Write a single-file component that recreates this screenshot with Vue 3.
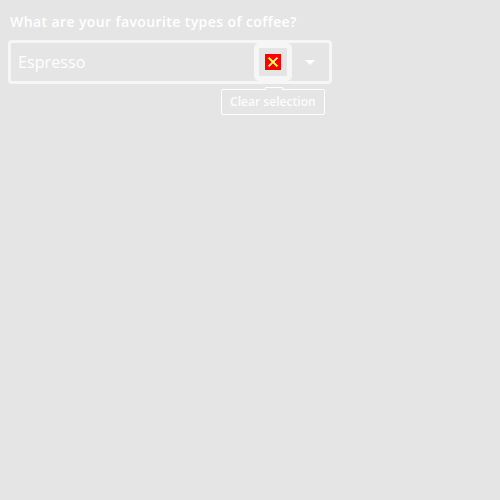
<script setup>
import { ref } from 'vue'

const label = 'What are your favourite types of coffee?'
const selected = ref('Espresso')
</script>

<template>
  <div class="field">
    <label class="label">{{ label }}</label>
    <div class="control">
      <span class="value">{{ selected }}</span>
      <button class="clear" type="button" @click="selected = ''">
        <svg class="icon" width="16" height="16" viewBox="0 0 16 16">
          <rect width="16" height="16" fill="#ff0000" />
          <path d="M12.6 4.2L11.8 3.4 8 7.2 4.2 3.4 3.4 4.2 7.2 8 3.4 11.8 4.2 12.6 8 8.8 11.8 12.6 12.6 11.8 8.8 8z" fill="#ffffff" stroke="#ffff00" stroke-width="1" />
        </svg>
      </button>
      <svg class="caret" width="10" height="5" viewBox="0 0 10 5">
        <path d="M0 0H10L5 5Z" fill="#ffffff" />
      </svg>
    </div>
    <div class="tooltip">
      <span class="arrow"></span>
      <span>Clear selection</span>
    </div>
  </div>
</template>

<style>
body {
  background: #e5e5e5;
}
</style>

<style scoped>
.field {
  display: flex;
  flex-direction: column;
  box-sizing: border-box;
  width: 332px;
  padding: 12px 0 0 8px;
  color: #ffffff;
  font-family: "Open Sans", sans-serif;
}

.label {
  padding-left: 2px;
  margin-bottom: 8px;
  font-size: 14px;
  line-height: 20px;
  font-weight: 600;
  letter-spacing: 0.4px;
  white-space: nowrap;
}

.control {
  display: flex;
  align-items: center;
  box-sizing: border-box;
  height: 44px;
  padding: 0 14px 0 7px;
  border: 3px solid #f6f6f6;
  border-radius: 4px;
}

.value {
  flex: 1;
  font-size: 16px;
  line-height: 24px;
  font-weight: 400;
  letter-spacing: 0.08px;
}

.clear {
  display: flex;
  align-items: center;
  justify-content: center;
  box-sizing: border-box;
  width: 38px;
  height: 38px;
  margin-right: 13px;
  padding: 0;
  border: 5px solid #f6f6f6;
  border-radius: 5px;
  background: transparent;
}

.icon,
.caret {
  display: block;
}

.tooltip {
  position: relative;
  align-self: flex-end;
  box-sizing: border-box;
  width: 104px;
  height: 26px;
  margin: 5px 7px 0 0;
  padding-left: 8px;
  border: 1px solid #ffffff;
  border-radius: 2px;
  color: #fdfdfd;
  font-size: 12px;
  line-height: 24px;
  font-weight: 600;
  letter-spacing: 0.04px;
  white-space: nowrap;
}

.arrow {
  position: absolute;
  top: -3px;
  left: 43px;
  box-sizing: border-box;
  width: 18px;
  height: 3px;
  border: 1px solid #ffffff;
  border-bottom: 0;
  border-radius: 1px 1px 0 0;
  background: #e5e5e5;
}
</style>
